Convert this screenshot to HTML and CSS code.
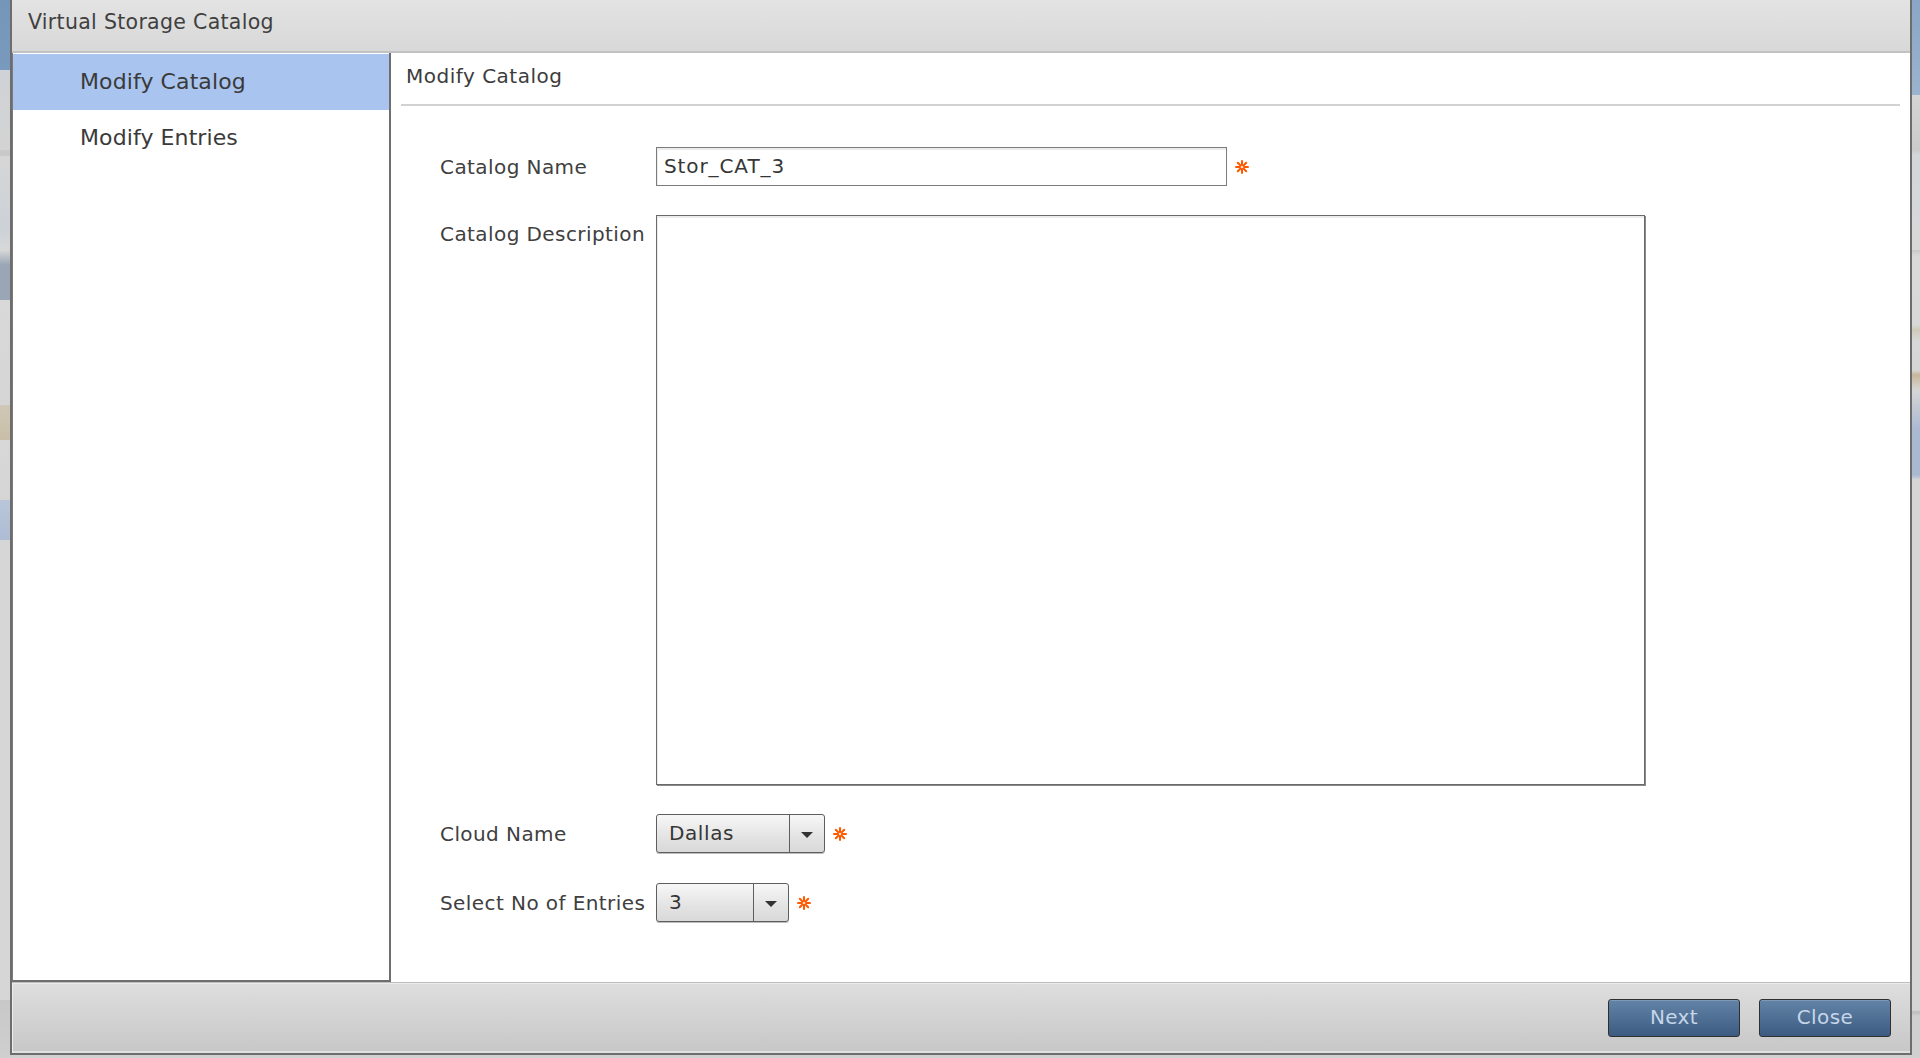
FILE: index.html
```html
<!DOCTYPE html>
<html lang="en">
<head>
<meta charset="utf-8">
<title>Virtual Storage Catalog</title>
<link rel="stylesheet" href="styles.css">
</head>
<body>
<div class="dialog">
  <div class="titlebar">Virtual Storage Catalog</div>
  <div class="main">
    <nav class="steps">
      <div class="step active">Modify Catalog</div>
      <div class="step">Modify Entries</div>
    </nav>
    <section class="pane">
      <div class="pane-title">Modify Catalog</div>
      <div class="form">
        <div class="row">
          <div class="label">Catalog Name</div>
          <div class="input">Stor_CAT_3</div>
          <svg class="req" viewBox="0 0 14 14" width="14" height="14"><g stroke="#ff5a00" stroke-width="2" stroke-linecap="round"><line x1="7" y1="1" x2="7" y2="13"/><line x1="1" y1="7" x2="13" y2="7"/><line x1="2.8" y1="2.8" x2="11.2" y2="11.2"/><line x1="11.2" y1="2.8" x2="2.8" y2="11.2"/></g><circle cx="7" cy="7" r="1.3" fill="#ffe0c8"/></svg>
        </div>
        <div class="row row-top">
          <div class="label label-top">Catalog Description</div>
          <div class="textarea"></div>
        </div>
        <div class="row">
          <div class="label">Cloud Name</div>
          <div class="combo combo-wide"><span class="combo-value">Dallas</span><span class="combo-btn"><span class="tri"></span></span></div>
          <svg class="req" viewBox="0 0 14 14" width="14" height="14"><g stroke="#ff5a00" stroke-width="2" stroke-linecap="round"><line x1="7" y1="1" x2="7" y2="13"/><line x1="1" y1="7" x2="13" y2="7"/><line x1="2.8" y1="2.8" x2="11.2" y2="11.2"/><line x1="11.2" y1="2.8" x2="2.8" y2="11.2"/></g><circle cx="7" cy="7" r="1.3" fill="#ffe0c8"/></svg>
        </div>
        <div class="row row-last">
          <div class="label">Select No&nbsp;of Entries</div>
          <div class="combo combo-narrow"><span class="combo-value">3</span><span class="combo-btn"><span class="tri"></span></span></div>
          <svg class="req" viewBox="0 0 14 14" width="14" height="14"><g stroke="#ff5a00" stroke-width="2" stroke-linecap="round"><line x1="7" y1="1" x2="7" y2="13"/><line x1="1" y1="7" x2="13" y2="7"/><line x1="2.8" y1="2.8" x2="11.2" y2="11.2"/><line x1="11.2" y1="2.8" x2="2.8" y2="11.2"/></g><circle cx="7" cy="7" r="1.3" fill="#ffe0c8"/></svg>
        </div>
      </div>
    </section>
  </div>
  <div class="footer">
    <button class="btn">Next</button>
    <button class="btn">Close</button>
  </div>
</div>
</body>
</html>
```
FILE: styles.css
```css
* { box-sizing: border-box; }

html, body {
  margin: 0;
  padding: 0;
}

body {
  width: 1920px;
  height: 1058px;
  overflow: hidden;
  font-family: "DejaVu Sans", "Liberation Sans", sans-serif;
  color: #3a3a3a;
  background:
    linear-gradient(to bottom,
      #7596b9 0, #7a9abd 70px, #cfd2d6 70px, #d3d3d3 150px, #c9c9c9 150px, #c9c9c9 156px,
      #d6d6d6 156px, #cdd2d8 230px, #d8d8d8 250px, #9aa6b5 265px, #9aa6b5 300px,
      #d9d9d9 300px, #d5d5d5 405px, #cfc8b6 405px, #c9bfa7 440px, #d8d8d8 440px,
      #d5d5d5 500px, #b9c6da 500px, #aebcd4 540px, #d6d6d6 540px, #d6d6d6 1000px,
      #c8c8c8 1000px, #cfcfcf 1058px) left top / 10px 100% no-repeat,
    linear-gradient(to bottom,
      #8aa6c6 0, #9ab3cf 95px, #d4d4d4 95px, #cbcbcb 150px, #d4d6da 155px, #d8d8d8 250px,
      #c8c8c8 250px, #d9d9d9 256px, #d8d8d8 325px, #cfcab8 330px, #d8d8d8 340px,
      #d6d6d6 370px, #c7b79a 375px, #d6d6d6 390px, #aab9d2 430px, #aab9d2 475px,
      #d6d6d6 480px, #d6d6d6 1010px, #bdbdbd 1012px, #d0d0d0 1016px) right top / 8px 100% no-repeat,
    #d0d0d0;
}

.dialog {
  margin-left: 10px;
  width: 1902px;
  height: 1055px;
  display: flex;
  flex-direction: column;
  border-left: 2px solid #6d6d6d;
  border-right: 2px solid #6d6d6d;
  border-bottom: 2px solid #6d6d6d;
  background: #fff;
}

.titlebar {
  height: 53px;
  flex: none;
  padding-left: 16px;
  font-size: 20.5px;
  letter-spacing: 0.3px;
  line-height: 44px;
  color: #404040;
  background: linear-gradient(to bottom, #e3e3e3, #d8d8d8);
  border-bottom: 2px solid #c2c2c2;
}

.main {
  flex: 1;
  display: flex;
  min-height: 0;
}

.steps {
  width: 379px;
  flex: none;
  padding-top: 1px;
  border-left: 1px solid #7a7a7a;
  border-right: 2px solid #6e6e6e;
  border-bottom: 2px solid #6e6e6e;
  background: #fff;
}

.step {
  height: 56px;
  padding-left: 67px;
  font-size: 22px;
  letter-spacing: 0.1px;
  line-height: 56px;
  color: #3a3a3a;
}

.step.active {
  background: #a9c5ef;
}

.pane {
  flex: 1;
  padding: 0 10px;
  background: #fff;
}

.pane-title {
  height: 53px;
  padding-top: 10px;
  padding-left: 5px;
  font-size: 20px;
  letter-spacing: 0.5px;
  line-height: 26px;
  color: #3c3c3c;
  border-bottom: 2px solid #d2d2d2;
}

.form {
  padding-top: 41px;
  padding-left: 39px;
  display: flex;
  flex-direction: column;
  gap: 29px;
}

.row {
  display: flex;
  align-items: center;
}

.row-top {
  align-items: flex-start;
}

.row-last {
  margin-top: 1px;
}

.label {
  width: 216px;
  flex: none;
  font-size: 20px;
  letter-spacing: 0.42px;
  line-height: 26px;
  color: #404040;
  white-space: nowrap;
}

.label-top {
  padding-top: 6px;
}

.input {
  width: 571px;
  height: 39px;
  padding-left: 7px;
  font-size: 20px;
  letter-spacing: 0.9px;
  line-height: 37px;
  color: #363636;
  border: 1px solid #7c7c7c;
  box-shadow: inset 1px 2px 0 #ececec;
  background: #fff;
}

.textarea {
  width: 989px;
  height: 570px;
  border: 1px solid #6a6a6a;
  box-shadow: inset 1px 2px 0 #ececec, 1px 1px 0 #8a8a8a;
  background: #fff;
}

.req {
  flex: none;
  margin-left: 8px;
}

.combo {
  height: 39px;
  display: flex;
  border: 1px solid #5e5e5e;
  border-radius: 3px;
  background: linear-gradient(to bottom, #f7f7f7, #e3e3e3 60%, #d9d9d9);
  box-shadow: 0 1px 0 #bdbdbd;
}

.combo-wide { width: 169px; }
.combo-narrow { width: 133px; }

.combo-value {
  flex: 1;
  padding-left: 12px;
  font-size: 20px;
  letter-spacing: 0.6px;
  line-height: 37px;
  color: #363636;
}

.combo-btn {
  width: 35px;
  flex: none;
  border-left: 1px solid #5e5e5e;
  display: flex;
  align-items: center;
  justify-content: center;
}

.tri {
  width: 0;
  height: 0;
  border-left: 6px solid transparent;
  border-right: 6px solid transparent;
  border-top: 6px solid #333;
  margin-top: 2px;
}

.footer {
  height: 71px;
  flex: none;
  display: flex;
  align-items: center;
  justify-content: flex-end;
  gap: 19px;
  padding-right: 19px;
  border-top: 1px solid #bdbdbd;
  background: linear-gradient(to bottom, #dedede, #c7c7c7);
  box-shadow: inset 1px 1px 0 #ececec, inset 0 -2px 0 #e0e0e0;
}

.btn {
  width: 132px;
  height: 38px;
  padding: 0 0 2px;
  font-family: "DejaVu Sans", "Liberation Sans", sans-serif;
  font-size: 20px;
  letter-spacing: 0.4px;
  color: #c6d6e8;
  border: 1px solid #2f2f2f;
  border-radius: 3px;
  background: linear-gradient(to bottom, #6383a7, #4f6f94 50%, #3c5b80);
  box-shadow: inset 0 1px 0 #7f9ab8;
}
```
